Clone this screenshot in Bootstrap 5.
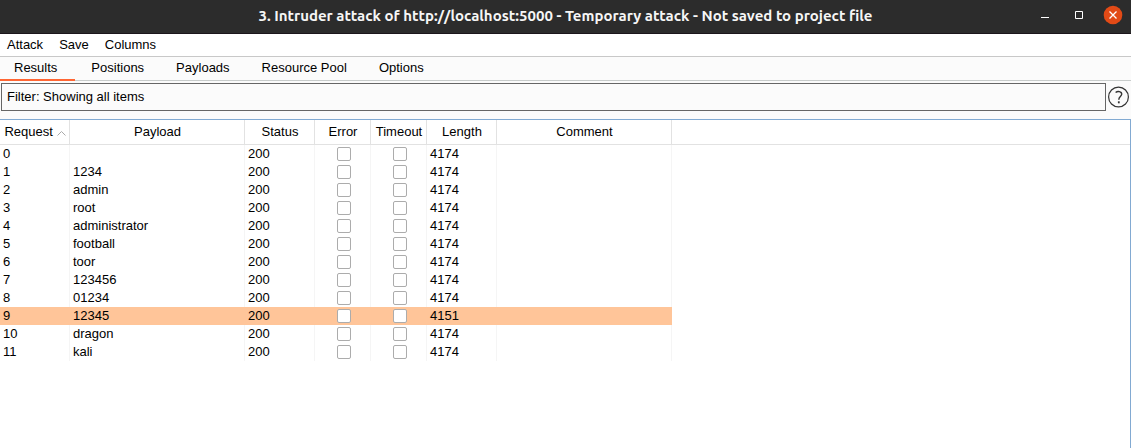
<!DOCTYPE html>
<html lang="en">
<head>
<meta charset="utf-8">
<meta name="viewport" content="width=device-width, initial-scale=1">
<title>Intruder attack</title>
<link rel="stylesheet" href="https://cdn.jsdelivr.net/npm/bootstrap@5.3.0/dist/css/bootstrap.min.css">
<style>
  body { font: 13px/18px "Liberation Sans", Arial, sans-serif; color: #000; background: #fbfbfb; }
  button { font: inherit; color: inherit; }
  .titlebar { height: 34px; background: #2c2c2c; border-bottom: 1px solid #1c161b; color: #f6f6f6; padding-bottom: 2px; }
  .titlebar h1 { font: 700 15px/20px Ubuntu, "Noto Sans", sans-serif; }
  .window-buttons { gap: 16px; right: 9px; top: 6px; }
  .window-buttons button { width: 18px; height: 18px; }
  .window-buttons svg, .help-btn svg { display: block; }
  .menubar { height: 23px; border-bottom: 1px solid #c8c8c8; gap: 16px; padding: 0 7px; }
  .attack-tabs { height: 24px; border-bottom: 1px solid #c8cccb; }
  .attack-tabs .nav-link { height: 24px; padding: 2px 16px 0; color: #000; border-radius: 0; border-bottom: 2px solid transparent; line-height: 18px; }
  .attack-tabs .nav-item:first-child .nav-link { padding-left: 14px; padding-right: 18px; }
  .attack-tabs .nav-link.active { background: none; color: #000; border-bottom-color: #ff6633; }
  .filter-row { padding: 2px 2px 8px 1px; gap: 2px; }
  .filter-btn { height: 28px; border: 1px solid #666; background: #fbfbfb; padding: 0 5px; }
  .results-pane { border-top: 1px solid #82aad2; border-right: 1px solid #82aad2; background: #fff; }
  .results { table-layout: fixed; width: 672px; border-collapse: separate; border-spacing: 0; }
  .results th { height: 24px; padding: 0 0 0 1px; font-weight: 400; text-align: center; border-right: 1px solid #e2e2e2; white-space: nowrap; }
  .results th svg { vertical-align: 0; }
  .results td { height: 18px; padding: 0 3px; line-height: 18px; border-right: 1px solid #f5f5f5; }
  .results td.tick { padding: 0 0 0 22px; }
  .results .picked td { background: #ffc599; border-right-color: #ffc599; }
  .results input { appearance: none; display: block; width: 14px; height: 14px; margin: 0; border: 1px solid #acacac; border-radius: 2px; background: #fff; }
  .results input:checked { background: #ff6633; }
  .head-rule { border-bottom: 1px solid #e2e2e2; height: 25px; top: 0; left: 0; right: 0; pointer-events: none; }
  .results tbody::before { content: ""; display: block; height: 1px; }
</style>
</head>
<body class="d-flex flex-column min-vh-100">
<header class="titlebar position-relative d-flex align-items-center justify-content-center">
  <h1 class="m-0">3. Intruder attack of http://localhost:5000 - Temporary attack - Not saved to project file</h1>
  <div class="window-buttons position-absolute d-flex">
    <button class="border-0 bg-transparent p-0" aria-label="Minimize"><svg width="18" height="18"><path d="M5 11.500h8" stroke="#fff"/></svg></button>
    <button class="border-0 bg-transparent p-0" aria-label="Maximize"><svg width="18" height="18"><path d="M5.500 5.500h7v7h-7z" fill="none" stroke="#fff"/></svg></button>
    <button class="border-0 bg-transparent p-0" aria-label="Close"><svg width="18" height="18" overflow="visible"><circle cx="9" cy="9" r="9.300" fill="#e24a16"/><path d="M5.500 5.500l7 7m0-7l-7 7" stroke="#fff" stroke-width="1.300"/></svg></button>
  </div>
</header>
<nav class="menubar bg-white d-flex align-items-center" aria-label="Menu">
  <button class="border-0 bg-transparent p-0">Attack</button>
  <button class="border-0 bg-transparent p-0">Save</button>
  <button class="border-0 bg-transparent p-0">Columns</button>
</nav>
<ul class="nav attack-tabs">
  <li class="nav-item"><a class="nav-link active" href="#results" aria-current="page">Results</a></li>
  <li class="nav-item"><a class="nav-link" href="#positions">Positions</a></li>
  <li class="nav-item"><a class="nav-link" href="#payloads">Payloads</a></li>
  <li class="nav-item"><a class="nav-link" href="#pool">Resource Pool</a></li>
  <li class="nav-item"><a class="nav-link" href="#options">Options</a></li>
</ul>
<div class="filter-row d-flex align-items-center">
  <button class="filter-btn flex-grow-1 text-start">Filter: Showing all items</button>
  <button class="help-btn border-0 bg-transparent p-0" aria-label="Help"><svg width="21" height="22" viewBox="0 0 21 22" fill="none" stroke="#333"><circle cx="10.500" cy="11" r="9.900" stroke-width="1.200"/><path d="M7.600 6.500C9.500 5 13.800 5.100 13.700 8.300C13.500 10.500 10.800 10.800 10.800 13.700" stroke-width="1.400"/><path d="M10.800 15.300v2" stroke-width="1.800"/></svg></button>
</div>
<main class="results-pane position-relative flex-grow-1" id="results">
  <div class="head-rule position-absolute"></div>
  <table class="results">
    <colgroup><col style="width:70px"><col style="width:175px"><col style="width:70px"><col style="width:56px"><col style="width:56px"><col style="width:70px"><col style="width:175px"></colgroup>
    <thead><tr>
      <th scope="col">Request <svg width="9" height="6" viewBox="0 0 9 6" aria-hidden="true"><path d="M.5 5.500l4-4 4 4" fill="none" stroke="#aaa"/></svg></th>
      <th scope="col">Payload</th><th scope="col">Status</th><th scope="col">Error</th><th scope="col">Timeout</th><th scope="col">Length</th><th scope="col">Comment</th>
    </tr></thead>
    <tbody id="rows"></tbody>
  </table>
</main>
<script src="https://cdn.jsdelivr.net/npm/bootstrap@5.3.0/dist/js/bootstrap.bundle.min.js"></script>
<script>
  const payloads = ["", "1234", "admin", "root", "administrator", "football", "toor", "123456", "01234", "12345", "dragon", "kali"];
  document.getElementById("rows").innerHTML = payloads.map((p, i) => `
    <tr${i === 9 ? ' class="picked"' : ""}>
      <td>${i}</td><td>${p}</td><td>200</td>
      <td class="tick"><input type="checkbox" aria-label="Error, request ${i}"></td>
      <td class="tick"><input type="checkbox" aria-label="Timeout, request ${i}"></td>
      <td>${i === 9 ? 4151 : 4174}</td><td></td>
    </tr>`).join("");
</script>
</body>
</html>
